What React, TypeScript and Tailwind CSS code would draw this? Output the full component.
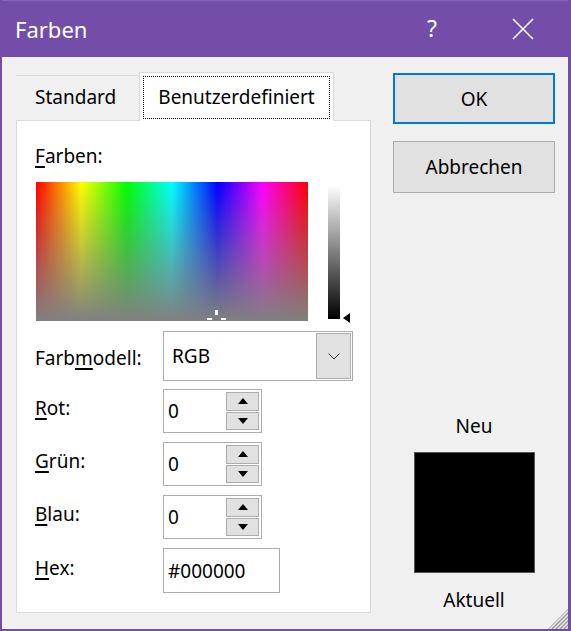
import React from 'react';

const Key = ({ children }: { children: React.ReactNode }) => (
  <span className="underline decoration-2 underline-offset-[3px]">{children}</span>
);

const Arrow = ({ up }: { up?: boolean }) => (
  <svg width="10" height="6" viewBox="0 0 10 6">
    <path d={up ? 'M0 6 L5 0 L10 6 Z' : 'M0 0 L10 0 L5 6 Z'} fill="#000" />
  </svg>
);

const SpinBox = () => (
  <div className="w-[99px] h-[44px] border border-[#adadad] bg-white flex items-stretch p-px">
    <span className="flex-1 flex items-center pl-[3px]">0</span>
    <div className="w-[34px] flex flex-col gap-px pr-px py-px">
      <div className="flex-1 bg-[#e1e1e1] border border-[#adadad] flex items-center justify-center">
        <Arrow up />
      </div>
      <div className="flex-1 bg-[#e1e1e1] border border-[#adadad] flex items-center justify-center">
        <Arrow />
      </div>
    </div>
  </div>
);

const FieldRow = ({ label, children, className }: { label: React.ReactNode; children: React.ReactNode; className?: string }) => (
  <div className={`flex items-center ${className ?? ''}`}>
    <div className="w-[128px] pb-[6px]">{label}</div>
    {children}
  </div>
);

export default function App() {
  return (
    <div className="w-[571px] h-[631px] bg-[#744da9] pl-[2px] pr-[3px] pb-[2px] flex flex-col font-['Noto_Sans',sans-serif] text-[19px] leading-[26px] text-black">
      {/* title bar */}
      <div className="h-[57px] flex items-center text-white border-t border-[#8265b3]">
        <span className="pl-[13px] text-[22px] flex-1 -mt-[1px]">Farben</span>
        <span className="text-[23px] mr-[75px] -mt-[2px]">?</span>
        <svg width="22" height="22" viewBox="0 0 22 22" className="mr-[34px]">
          <path d="M1 1 L21 21 M21 1 L1 21" stroke="#fff" strokeWidth="1.6" />
        </svg>
      </div>

      {/* body */}
      <div className="flex-1 bg-[#f0f0f0] flex relative">
        <div className="ml-[14px] mt-[15px] w-[355px] flex flex-col">
          {/* tabs */}
          <div className="h-[48px] flex items-end">
            <div className="w-[123px] h-[45px] border-t border-[#d9d9d9] flex items-center pl-[19px] pb-[2px]">
              Standard
            </div>
            <div className="w-[195px] h-[49px] -mb-px bg-white border border-b-0 border-[#d9d9d9] relative z-10 p-[3px] pb-[2px]">
              <div className="h-full border border-dotted border-black flex items-center justify-center pb-[2px]">
                Benutzerdefiniert
              </div>
            </div>
          </div>

          {/* panel */}
          <div className="h-[493px] bg-white border border-[#d9d9d9] pl-[18px] pt-[22px]">
            <div>
              <Key>F</Key>arben:
            </div>
            <div className="flex mt-[13px] pl-px">
              <div className="relative w-[272px] h-[139px] bg-[linear-gradient(to_right,#ff0000,#ffff00,#00ff00,#00ffff,#0000ff,#ff00ff,#ff0000)]">
                <div className="absolute inset-0 bg-[linear-gradient(to_bottom,rgba(128,128,128,0),#808080)]" />
                <div className="absolute left-[179px] top-[128px] w-[3px] h-[5px] bg-white" />
                <div className="absolute left-[171px] top-[136px] w-[5px] h-[2px] bg-white" />
                <div className="absolute left-[185px] top-[136px] w-[5px] h-[2px] bg-white" />
              </div>
              <div className="ml-[20px] mt-[3px] w-[12px] h-[134px] bg-[linear-gradient(to_bottom,#ffffff,#000000)]" />
              <div className="flex items-end ml-[3px]">
                <svg width="7" height="10" viewBox="0 0 7 10" className="-mb-[2px]">
                  <path d="M0 5 L7 0 L7 10 Z" fill="#000" />
                </svg>
              </div>
            </div>

            <div className="flex items-center mt-[10px]">
              <div className="w-[128px] pt-[3px]">
                Farb<Key>m</Key>odell:
              </div>
              <div className="w-[190px] h-[50px] border border-[#adadad] bg-white flex items-stretch p-px">
                <span className="flex-1 flex items-center pl-[7px]">RGB</span>
                <div className="w-[35px] bg-[#e1e1e1] border border-[#adadad] flex items-center justify-center">
                  <svg width="12" height="7" viewBox="0 0 12 7">
                    <path d="M0.5 0.5 L6 6 L11.5 0.5" stroke="#333" strokeWidth="1" fill="none" />
                  </svg>
                </div>
              </div>
            </div>

            <FieldRow className="mt-[8px]" label={<><Key>R</Key>ot:</>}>
              <SpinBox />
            </FieldRow>
            <FieldRow className="mt-[9px]" label={<><Key>G</Key>rün:</>}>
              <SpinBox />
            </FieldRow>
            <FieldRow className="mt-[9px]" label={<><Key>B</Key>lau:</>}>
              <SpinBox />
            </FieldRow>
            <FieldRow className="mt-[9px]" label={<><Key>H</Key>ex:</>}>
              <div className="w-[117px] h-[45px] border border-[#adadad] bg-white flex items-center pl-[4px]">
                #000000
              </div>
            </FieldRow>
          </div>
        </div>

        {/* right column */}
        <div className="ml-[22px] w-[162px] flex flex-col items-center">
          <div className="mt-[16px] w-full h-[51px] bg-[#e1e1e1] border-2 border-[#0078d7] flex items-center justify-center">
            OK
          </div>
          <div className="mt-[17px] w-full h-[52px] bg-[#e1e1e1] border border-[#adadad] flex items-center justify-center">
            Abbrechen
          </div>
          <div className="mt-[220px]">Neu</div>
          <div className="mt-[13px] w-[121px] h-[121px] bg-black border border-[#555555]" />
          <div className="mt-[14px]">Aktuell</div>
        </div>

        {/* size grip */}
        <svg width="20" height="20" viewBox="0 0 20 20" className="absolute right-0 bottom-0">
          <defs>
            <clipPath id="grip">
              <path d="M20 0 L20 20 L0 20 Z" />
            </clipPath>
          </defs>
          <g clipPath="url(#grip)" stroke="#999999" strokeWidth="1.5">
            <path d="M-2 22 L22 -2" />
            <path d="M2 22 L22 2" />
            <path d="M6 22 L22 6" />
            <path d="M10 22 L22 10" />
            <path d="M14 22 L22 14" />
            <path d="M18 22 L22 18" />
          </g>
        </svg>
      </div>
    </div>
  );
}
